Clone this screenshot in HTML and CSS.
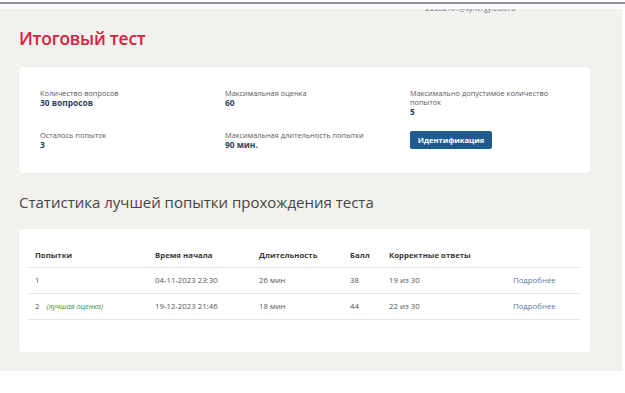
FILE: index.html
```html
<!DOCTYPE html>
<html lang="ru">
<head>
<meta charset="utf-8">
<title>Итоговый тест</title>
<link rel="stylesheet" href="styles.css">
</head>
<body>
<div class="topline"></div>
<main class="page">
  <div class="userbar"><span class="user">s.2262161@synergy.edu.ru</span></div>
  <h1 class="title">Итоговый тест</h1>
  <section class="card info">
    <div class="item">
      <div class="label">Количество вопросов</div>
      <div class="value">30 вопросов</div>
    </div>
    <div class="item">
      <div class="label">Максимальная оценка</div>
      <div class="value">60</div>
    </div>
    <div class="item">
      <div class="label">Максимально допустимое количество попыток</div>
      <div class="value">5</div>
    </div>
    <div class="item">
      <div class="label">Осталось попыток</div>
      <div class="value">3</div>
    </div>
    <div class="item">
      <div class="label">Максимальная длительность попытки</div>
      <div class="value">90 мин.</div>
    </div>
    <div class="item action">
      <button class="btn">Идентификация</button>
    </div>
  </section>
  <h2 class="subtitle">Статистика лучшей попытки прохождения теста</h2>
  <section class="card stats">
    <table class="table">
      <colgroup>
        <col class="c1"><col class="c2"><col class="c3"><col class="c4"><col class="c5"><col class="c6">
      </colgroup>
      <thead>
        <tr><th>Попытки</th><th>Время начала</th><th>Длительность</th><th>Балл</th><th>Корректные ответы</th><th></th></tr>
      </thead>
      <tbody>
        <tr><td>1</td><td>04-11-2023 23:30</td><td>26 мин</td><td>38</td><td>19 из 30</td><td><a class="more" href="#">Подробнее</a></td></tr>
        <tr><td>2 <span class="best">(лучшая оценка)</span></td><td>19-12-2023 21:46</td><td>18 мин</td><td>44</td><td>22 из 30</td><td><a class="more" href="#">Подробнее</a></td></tr>
      </tbody>
    </table>
  </section>
</main>
</body>
</html>
```

FILE: styles.css
```css
* { box-sizing: border-box; }
html, body { margin: 0; padding: 0; background: #fff; }
body { font-family: "Open Sans", "Noto Sans", sans-serif; color: #555; width: 625px; height: 393px; overflow: hidden; }

.topline { height: 2px; margin-top: 2px; background: #8e959c; margin-bottom: 5px; }

.page {
  width: 622px;
  background: #f2f1ee;
  padding: 0 32px 19px 19px;
}

.userbar { height: 4px; overflow: hidden; padding-left: 406px; }
.user { display: block; font-size: 7.2px; line-height: 10px; margin-top: -6px; color: #6b7480; }

.title {
  margin: 0;
  padding: 13px 0 0 0;
  height: 54px;
  font-size: 17.4px;
  font-weight: 600;
  color: #d7213f;
  line-height: 24px;
  letter-spacing: -0.2px;
}

.card {
  background: #fff;
  border-radius: 3px;
  box-shadow: 0 0 2px rgba(0,0,0,0.06);
}

.info {
  height: 106px;
  display: grid;
  grid-template-columns: 185px 185px 185px;
  align-content: start;
  row-gap: 14px;
  padding: 22px 16px 0 21px;
}
.label { font-size: 7.4px; line-height: 9px; color: #5a5a5a; }
.value { font-size: 8.4px; line-height: 10px; font-weight: 700; color: #2e3f5c; }
.info .item:nth-child(3) .label { width: 140px; }
.action { display: flex; align-items: flex-start; }

.btn {
  width: 82px;
  height: 18px;
  border: none;
  border-radius: 2px;
  background: #1e5a8e;
  color: #fff;
  font-family: "Open Sans", sans-serif;
  font-size: 7.6px;
  font-weight: 700;
  padding: 0;
}

.subtitle {
  margin: 0;
  padding-top: 17px;
  height: 56px;
  font-size: 15px;
  font-weight: 400;
  color: #454545;
  line-height: 24px;
  letter-spacing: 0;
}

.stats { height: 123px; padding: 15px 9px 0 9px; }
.table { width: 553px; border-collapse: collapse; table-layout: fixed; }
.c1 { width: 120px; } .c2 { width: 104px; } .c3 { width: 91px; } .c4 { width: 39px; } .c5 { width: 124px; } .c6 { width: 75px; }
.table th, .table td { text-align: left; padding: 0 0 0 7px; font-size: 7.8px; white-space: nowrap; }
.table th { height: 23px; font-weight: 700; color: #3a3a3a; border-bottom: 1px solid #e6e6e6; vertical-align: middle; }
.table td { height: 26px; color: #555; border-bottom: 1px solid #e6e6e6; }
.best { margin-left: 5px; font-style: italic; color: #3f8c3f; font-size: 7.4px; }
.more { color: #57789f; text-decoration: none; }
```
